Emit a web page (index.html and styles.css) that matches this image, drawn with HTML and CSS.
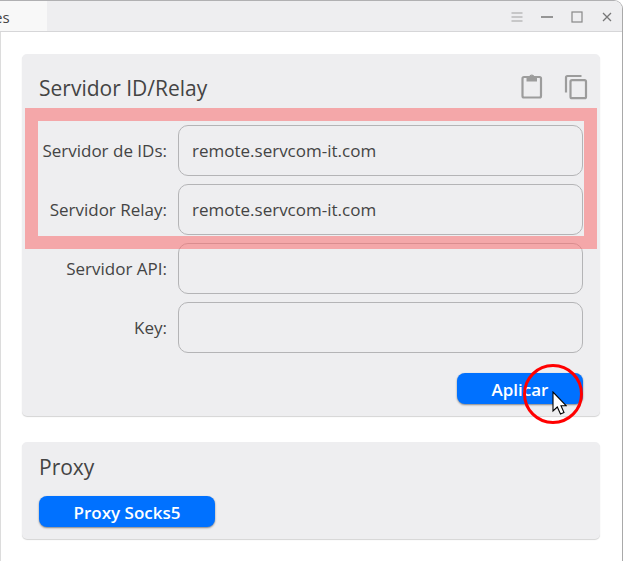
FILE: index.html
```html
<!DOCTYPE html>
<html lang="es">
  <head>
    <meta charset="utf-8" />
    <title>Ajustes</title>
    <link rel="stylesheet" href="styles.css">
  </head>
  <body>
    <div class="window">
      <header class="titlebar">
        <div class="tab">es</div>
        <div class="window-buttons">
          <button type="button" aria-label="Menú">
            <svg width="14" height="14" viewBox="0 0 14 14" stroke="#a0a0a0" stroke-width="1.2">
              <path d="M1.5 3H12.5M1.5 7H12.5M1.5 11H12.5" />
            </svg>
          </button>
          <button type="button" aria-label="Minimizar">
            <svg width="14" height="14" viewBox="0 0 14 14" stroke="#777" stroke-width="1.4">
              <path d="M1 7H13" />
            </svg>
          </button>
          <button type="button" aria-label="Maximizar">
            <svg width="14" height="14" viewBox="0 0 14 14" fill="none" stroke="#888" stroke-width="1.2">
              <rect x="2" y="2" width="10" height="10" />
            </svg>
          </button>
          <button type="button" aria-label="Cerrar">
            <svg width="14" height="14" viewBox="0 0 14 14" stroke="#777" stroke-width="1.3">
              <path d="M3 3L11 11M11 3L3 11" />
            </svg>
          </button>
        </div>
      </header>

      <main class="content">
        <form class="card">
          <div class="card-header">
            <h2>Servidor ID/Relay</h2>
            <div class="card-actions">
              <button type="button" aria-label="Pegar">
                <svg width="28" height="28" viewBox="0 0 28 28" fill="none" stroke="#9c9c9c" stroke-width="2.2">
                  <rect x="3.500" y="3" width="18.500" height="20.500" rx="1.500" />
                  <path fill="#9c9c9c" stroke="none" fill-rule="evenodd" d="M7.500 2.500H10.200A2.700 2.700 0 0 1 15.400 2.500H18V7.500H7.500ZM12.800 1.800A1 1 0 1 0 12.800 3.800A1 1 0 1 0 12.800 1.800Z" />
                </svg>
              </button>
              <button type="button" aria-label="Copiar">
                <svg width="28" height="28" viewBox="0 0 28 28" fill="none" stroke="#9c9c9c" stroke-width="2.2">
                  <path d="M3 18.500V3.500Q3 2 4.500 2H18.500" />
                  <rect x="7.500" y="6.200" width="15.500" height="18" rx="1.500" />
                </svg>
              </button>
            </div>
          </div>

          <div class="fields">
            <label for="idServer">Servidor de IDs:</label>
            <input type="text" id="idServer" name="idServer" value="remote.servcom-it.com" />
            <label for="relayServer">Servidor Relay:</label>
            <input type="text" id="relayServer" name="relayServer" value="remote.servcom-it.com" />
            <label for="apiServer">Servidor API:</label>
            <input type="text" id="apiServer" name="apiServer" />
            <label for="key">Key:</label>
            <input type="text" id="key" name="key" />
            <div class="highlight"></div>
          </div>

          <div class="form-footer">
            <div class="apply">
              <button type="button" class="btn btn-apply">Aplicar</button>
              <div class="click-ring"></div>
              <svg class="cursor" width="15" height="24" viewBox="0 0 15 24">
                <path d="M1 1V20L5.300 16L8.500 23L12 21.500L9 14.800H14.300Z" fill="#fff" stroke="#000" stroke-width="1.1" />
              </svg>
            </div>
          </div>
        </form>

        <section class="card card-proxy">
          <h2>Proxy</h2>
          <button type="button" class="btn btn-proxy">Proxy Socks5</button>
        </section>
      </main>
    </div>
  </body>
</html>
```
FILE: styles.css
```css
* {
  box-sizing: border-box;
}

body {
  margin: 0;
  background-color: #fff;
  color: #444;
  font-family: "Open Sans", "Noto Sans", sans-serif;
  font-size: 17px;
}

button {
  padding: 0;
  border: none;
  background: none;
  font-family: inherit;
  cursor: pointer;
}

svg {
  display: block;
}

h2 {
  margin: 0;
  font-size: 21px;
  font-weight: 400;
  line-height: 28px;
}

.window {
  min-height: 100vh;
  border-top: 1px solid #b0b0b2;
  border-right: 1px solid #a9a9a9;
  border-top-right-radius: 9px;
  overflow: hidden;
}

/* title bar */
.titlebar {
  display: flex;
  justify-content: space-between;
  height: 31px;
  background-color: #eeeef0;
  border-bottom: 1px solid #d6d6d8;
}

.tab {
  width: 47px;
  background-color: #f8f8f8;
  font-size: 15px;
  line-height: 32px;
  text-indent: -6px;
}

.window-buttons {
  display: flex;
  align-items: center;
  gap: 16px;
  padding: 2px 8px 0 0;
}

/* content */
.content {
  display: flex;
  flex-direction: column;
  gap: 26px;
  min-height: calc(100vh - 32px);
  padding: 22px 22px 22px 21px;
  border-left: 1px solid #dcdcdc;
}

.card {
  padding: 18px 17px 12px;
  background-color: #eeeef0;
  border-radius: 5px;
  box-shadow: 0 1px 1px #d4d4d4;
}

.card-header {
  display: flex;
  justify-content: space-between;
  align-items: center;
  height: 32px;
}

.card-actions {
  display: flex;
  gap: 16px;
  margin-right: -8px;
}

.fields {
  position: relative;
  display: grid;
  grid-template-columns: 128px 1fr;
  gap: 8px 11px;
  align-items: center;
  margin-top: 21px;
}

.fields label {
  text-align: right;
}

.fields input {
  width: 100%;
  height: 51px;
  padding: 0 13px;
  background-color: transparent;
  border: 1px solid #b4b4b6;
  border-radius: 10px;
  color: #444;
  font-family: inherit;
  font-size: 17px;
}

/* frame around the two server fields */
.highlight {
  position: absolute;
  top: -17px;
  left: -14px;
  right: -14px;
  height: 141px;
  border: 13px solid rgba(250, 110, 112, 0.55);
  pointer-events: none;
}

.form-footer {
  display: flex;
  justify-content: flex-end;
  margin-top: 20px;
}

.btn {
  height: 31px;
  padding-top: 2px;
  border-radius: 8px;
  background-color: #0071ff;
  box-shadow: 0 1px 2px rgba(0, 0, 0, 0.45);
  color: #fff;
  font-size: 17px;
  font-weight: 600;
}

.apply {
  position: relative;
  height: 31px;
}

.btn-apply {
  width: 126px;
}

.btn-proxy {
  display: block;
  width: 176px;
  margin-top: 15px;
}

.card-proxy {
  padding: 11px 17px 12px;
}

.click-ring {
  position: absolute;
  top: -9px;
  right: 0;
  width: 60px;
  height: 60px;
  border: 3px solid #ff0000;
  border-radius: 50%;
  pointer-events: none;
}

.cursor {
  position: absolute;
  top: 18px;
  right: 16px;
  pointer-events: none;
}
```
